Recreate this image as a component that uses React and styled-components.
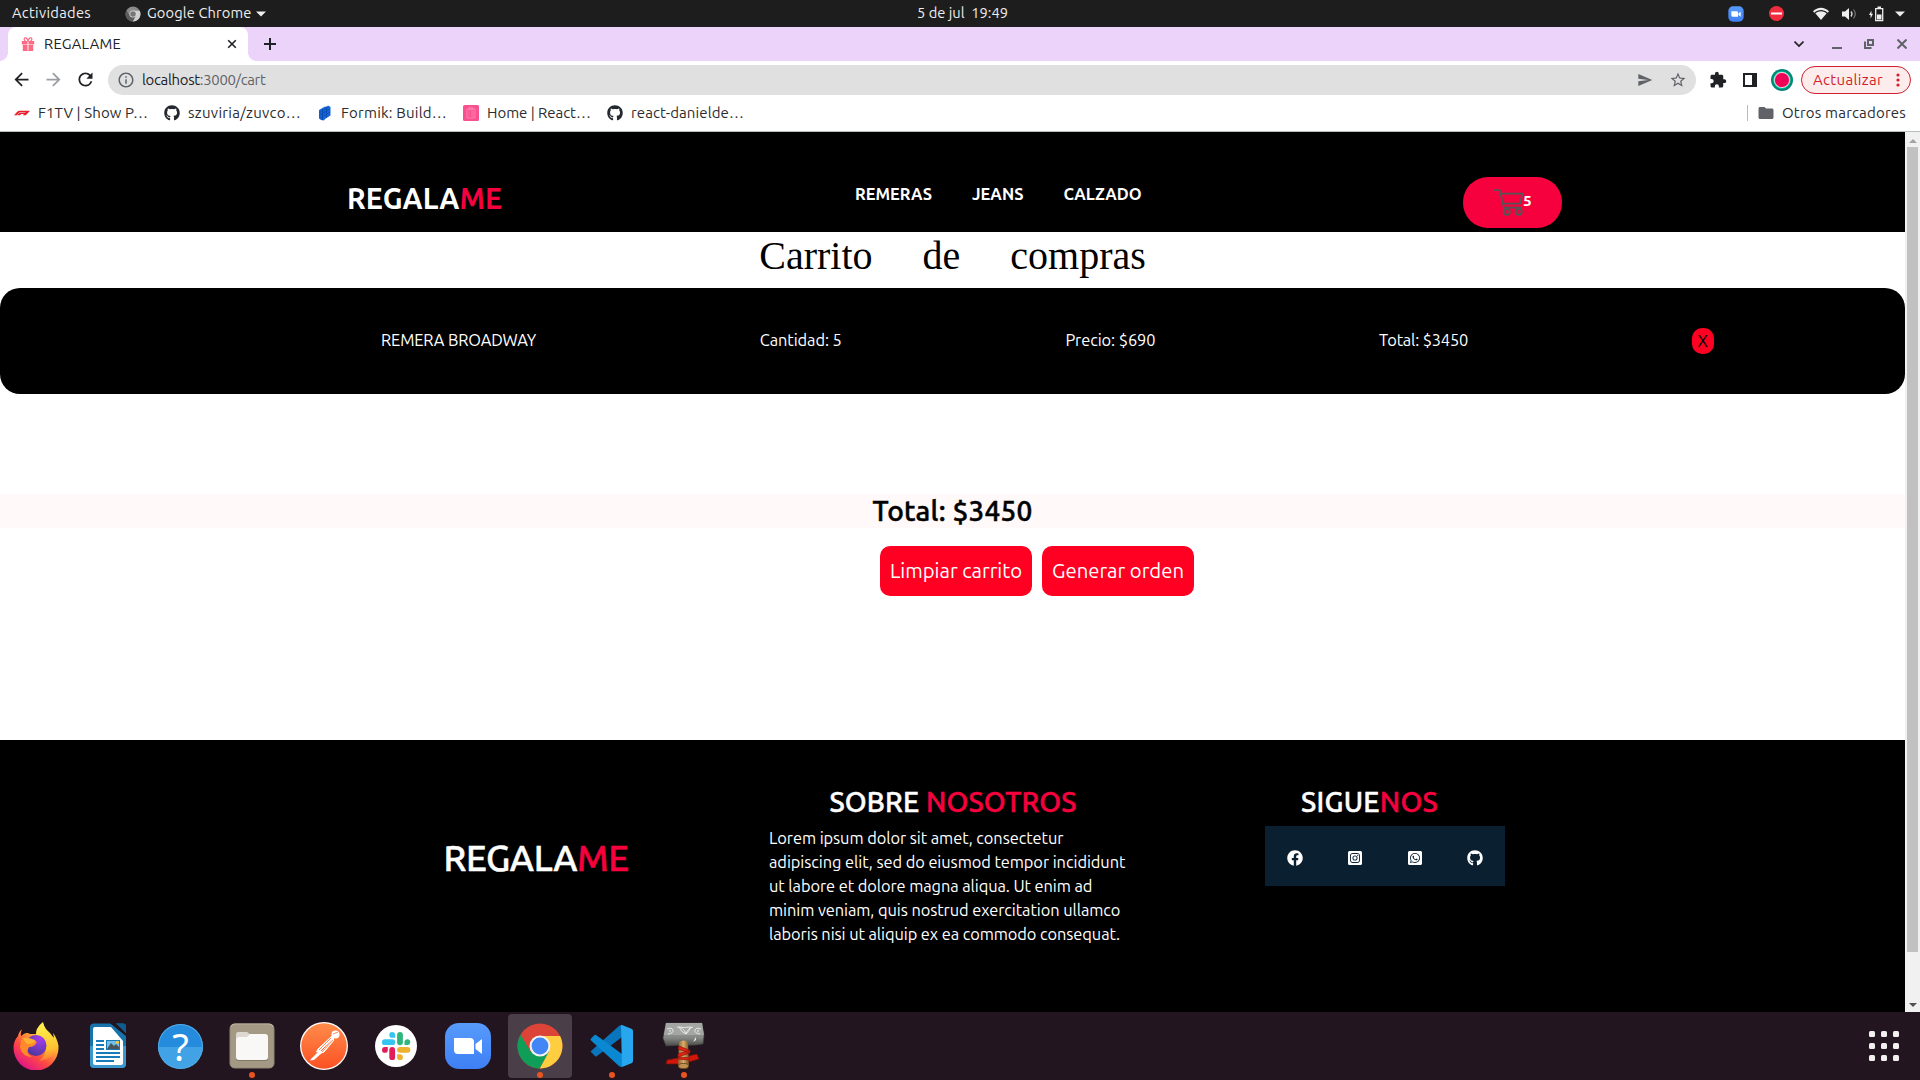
import React, { useLayoutEffect, useRef, useState } from "react";
import styled, { createGlobalStyle } from "styled-components";
import {
  FaFacebook,
  FaGithub,
  FaInstagramSquare,
  FaWhatsappSquare,
} from "react-icons/fa";
import {
  MdArrowBack,
  MdArrowForward,
  MdRefresh,
  MdInfoOutline,
  MdSend,
  MdStarBorder,
  MdExtension,
  MdFolder,
} from "react-icons/md";

const GlobalStyle = createGlobalStyle`
  *, *::before, *::after { box-sizing: border-box; }
  html, body { margin: 0; padding: 0; overflow: hidden; background: #fff; }
  body { font-family: Ubuntu, "Noto Sans", "Open Sans", sans-serif; color: #000; }
  h1, h2, h3, p, ul { margin: 0; padding: 0; font-weight: inherit; }
  svg { display: block; flex: none; }
`;

/* Text set to a fixed measure: tracking is adjusted so the run fills it. */
const Measure = styled.span`
  display: inline-block;
  flex: none;
  width: ${(p) => p.$w}px;
  white-space: pre;
`;

function Fit({ w, children }) {
  const ref = useRef(null);
  const [tracking, setTracking] = useState(0);
  useLayoutEffect(() => {
    const el = ref.current;
    el.style.letterSpacing = "0px";
    const natural = el.getBoundingClientRect().width;
    const value = (w - natural) / Math.max(1, el.textContent.length);
    el.style.letterSpacing = `${value}px`;
    setTracking(value);
  }, [w]);
  return (
    <Measure $w={w}>
      <span ref={ref} style={{ letterSpacing: tracking }}>
        {children}
      </span>
    </Measure>
  );
}

const Screen = styled.div`
  display: flex;
  flex-direction: column;
  width: 1920px;
  height: 1080px;
  overflow: hidden;
`;

/* ---------- desktop top bar ---------- */

const SystemBar = styled.header`
  display: grid;
  grid-template-columns: 917px 1fr auto;
  align-items: center;
  height: 27px;
  background: #1d1d1d;
  color: #eee;
  font-size: 14.67px;
`;

const SystemGroup = styled.div`
  display: flex;
  align-items: center;
  height: 27px;
  padding-left: ${(p) => p.$left || 0}px;
  line-height: 25px;

  ${Measure} {
    height: 27px;
  }
`;

const Spacer = styled.span`
  flex: none;
  width: ${(p) => p.$w}px;
`;

/* ---------- browser chrome ---------- */

const TabStrip = styled.div`
  display: flex;
  align-items: center;
  height: 34px;
  background: #ebd3fa;
`;

const TabCorner = styled.span`
  flex: none;
  align-self: flex-end;
  width: 8px;
  height: 8px;
  background: radial-gradient(
    circle at ${(p) => (p.$side === "left" ? "0 0" : "100% 0")},
    transparent 7.5px,
    #fff 8px
  );
`;

const Tab = styled.div`
  display: flex;
  align-items: center;
  width: 240px;
  height: 34px;
  padding-left: 13px;
  border-radius: 8px 8px 0 0;
  background: #fff;
  color: #202124;
  font-size: 14.67px;
  line-height: 34px;
`;

const TabTitle = styled.div`
  width: 181px;
  padding-left: 8px;
`;

const NewTab = styled.div`
  padding-left: 8px;
`;

const WindowControls = styled.div`
  display: flex;
  align-items: center;
  margin-left: auto;
  padding-right: 13px;
`;

const Toolbar = styled.div`
  display: flex;
  align-items: center;
  height: 37px;
  padding: 0 9px 0 11px;
  background: #fff;
  color: #202124;
`;

const Omnibox = styled.div`
  display: flex;
  align-items: center;
  width: 1588px;
  height: 30px;
  margin-left: 12px;
  padding: 0 9px;
  border-radius: 15px;
  background: #e0e0e0;
  color: #5f6368;
  font-size: 14.9px;
  line-height: 30px;
`;

const Url = styled.div`
  flex: 1;
  padding-left: 7px;
`;

const Host = styled.span`
  color: #202124;
`;

const UpdateButton = styled.div`
  display: flex;
  align-items: center;
  justify-content: space-between;
  width: 110px;
  height: 28px;
  margin-left: 8px;
  padding: 0 10px 0 11px;
  border: 1px solid #d01f2d;
  border-radius: 14px;
  background: #fcedec;
  color: #d01f2d;
  font-size: 15px;
  line-height: 26px;
`;

const Bookmarks = styled.div`
  display: flex;
  align-items: center;
  height: 34px;
  padding: 0 14px 3px 14px;
  border-bottom: 1px solid #b8beba;
  background: #fff;
  color: #2b2c2f;
  font-size: 15px;
  line-height: 30px;
`;

const Bookmark = styled.div`
  display: flex;
  align-items: center;
  gap: 8px;
  margin-right: 16px;
`;

const OtherBookmarks = styled.div`
  display: flex;
  align-items: center;
  margin-left: auto;
`;

const Divider = styled.span`
  width: 1px;
  height: 16px;
  margin-right: 9px;
  background: #bbb;
`;

/* ---------- page ---------- */

const Viewport = styled.div`
  display: flex;
  height: 880px;
`;

const Page = styled.main`
  display: flex;
  flex-direction: column;
  width: 1905px;
  background: #fff;
`;

const Scrollbar = styled.div`
  display: flex;
  flex-direction: column;
  align-items: center;
  justify-content: space-between;
  width: 15px;
  padding: 7px 0 5px;
  background: #f1f1f1;
`;

const Thumb = styled.div`
  width: 11px;
  height: 805px;
  margin-bottom: 47px;
  background: #c1c1c1;
`;

const Accent = styled.span`
  color: #f6003e;
`;

const SiteHeader = styled.header`
  display: flex;
  align-items: flex-start;
  height: 100px;
  padding-left: 347px;
  background: #000;
  color: #fff;
  font-weight: 700;
`;

const Brand = styled.div`
  width: 508px;
  padding-top: 46px;
  font-size: 28.6px;
  line-height: 40px;
`;

const Nav = styled.nav`
  display: flex;
  gap: 40px;
  width: 608px;
  padding-top: 50px;
  font-size: 16.4px;
  line-height: 24px;
`;

const CartPill = styled.div`
  display: flex;
  align-items: center;
  width: 99px;
  height: 51px;
  margin-top: 45px;
  padding-left: 30px;
  border-radius: 25px;
  background: #f6003e;
  font-size: 15.5px;
  line-height: 47px;
`;

const CartCount = styled.span`
  height: 51px;
  margin-left: -1px;
`;

const Title = styled.h1`
  height: 56px;
  font-family: "Liberation Serif", "Times New Roman", serif;
  font-size: 40px;
  line-height: 47px;
  text-align: center;
  word-spacing: 40px;
`;

const CartRow = styled.section`
  display: flex;
  align-items: center;
  gap: 223.7px;
  height: 106px;
  padding: 0 0 2px 381px;
  border-radius: 20px;
  background: #000;
  color: #fff;
  font-size: 16.4px;
  line-height: 24px;
`;

const RemoveButton = styled.span`
  display: flex;
  justify-content: center;
  width: 22px;
  height: 26px;
  margin-top: 2px;
  border-radius: 10px;
  background: #ff0022;
  color: #000;
  font-size: 17px;
  line-height: 26px;
`;

const TotalStrip = styled.section`
  height: 34px;
  margin-top: 100px;
  padding-left: 872.5px;
  background: #fff9f9;
  font-size: 28px;
  font-weight: 500;
  line-height: 34px;
  -webkit-text-stroke: 0.5px currentColor;
`;

const Actions = styled.div`
  display: flex;
  gap: 10px;
  padding: 18px 0 0 880px;
`;

const ActionButton = styled.div`
  display: flex;
  justify-content: center;
  width: 152px;
  height: 50px;
  border-radius: 10px;
  background: #ff0022;
  color: #fff;
  font-size: 20.3px;
  line-height: 50px;
`;

const Footer = styled.footer`
  display: flex;
  align-items: flex-start;
  height: 272px;
  margin-top: auto;
  padding-left: 443.5px;
  background: #000;
  color: #fff;
`;

const FooterBrand = styled.div`
  width: 325.5px;
  padding-top: 98px;
  font-size: 36px;
  font-weight: 500;
  line-height: 40px;
  -webkit-text-stroke: 0.5px currentColor;
`;

const FooterHeading = styled.h2`
  padding-left: ${(p) => p.$left}px;
  font-size: 28px;
  font-weight: 500;
  line-height: 34px;
  -webkit-text-stroke: 0.5px currentColor;
`;

const About = styled.div`
  width: 496px;
  padding-top: 45px;
`;

const AboutText = styled.p`
  display: flex;
  flex-direction: column;
  padding-top: 7px;
  font-size: 16.4px;
  line-height: 24px;
`;

const Follow = styled.div`
  padding-top: 45px;
`;

const SocialBar = styled.div`
  display: flex;
  width: 240px;
  height: 60px;
  margin-top: 7px;
  background: #0a1f30;
`;

const SocialLink = styled.span`
  display: flex;
  align-items: center;
  justify-content: center;
  width: 60px;
  padding-top: 4px;
  font-size: 16px;
`;

/* ---------- dock ---------- */

const Dock = styled.footer`
  display: flex;
  align-items: center;
  gap: 8px;
  height: 68px;
  padding: 0 21px 0 4px;
  background: #22151f;
`;

const DockItem = styled.div`
  display: flex;
  flex-direction: column;
  align-items: center;
  width: 64px;
  height: 64px;
  padding-top: 8px;
  border-radius: 4px;
  background: ${(p) => (p.$active ? "#4a3f48" : "transparent")};

  &::after {
    content: "";
    width: 6px;
    height: 6px;
    margin-top: 2px;
    border-radius: 50%;
    background: ${(p) => (p.$running ? "#e95420" : "transparent")};
  }
`;

const AppGrid = styled.div`
  display: grid;
  grid-template-columns: repeat(3, 6px);
  gap: 6px;
  margin-left: auto;
`;

const AppDot = styled.span`
  height: 6px;
  border-radius: 1.5px;
  background: #f2f0ef;
`;

/* ---------- icons ---------- */

const ChromeMark = ({ size, mono }) => {
  const c = mono
    ? ["#8a8a8a", "#5c5c5c", "#d0d0d0", "#777", "#ddd"]
    : ["#db4437", "#0f9d58", "#ffcd40", "#4285f4", "#f1f1f1"];
  return (
    <svg width={size} height={size} viewBox="0 0 48 48">
      <circle cx="24" cy="24" r="22.5" fill={c[0]} />
      <path d="M4.5 12.8A22.5 22.5 0 0 0 23.8 46.5L33.5 29.5 14.5 29.5Z" fill={c[1]} />
      <path d="M24 14H44.1A22.5 22.5 0 0 1 23.8 46.5L33 29.5Z" fill={c[2]} />
      <circle cx="24" cy="24" r="10.5" fill={c[4]} />
      <circle cx="24" cy="24" r="8.4" fill={c[3]} />
    </svg>
  );
};

const Caret = () => (
  <svg width="10" height="6" viewBox="0 0 10 6">
    <path d="M0 .5h10L5 5.5z" fill="#eee" />
  </svg>
);

const ZoomMark = ({ size }) => (
  <svg width={size} height={size} viewBox="0 0 48 48">
    <defs>
      <linearGradient id={`zoom${size}`} x2="0" y2="1">
        <stop stopColor="#579bfc" />
        <stop offset="1" stopColor="#3f7ff5" />
      </linearGradient>
    </defs>
    <rect x="1" y="1" width="46" height="46" rx="14" fill={`url(#zoom${size})`} />
    <path d="M10 16h16q4 0 4 4v12H14q-4 0-4-4zM31.5 22l6.5-5v15l-6.5-5z" fill="#fff" />
  </svg>
);

const Wifi = () => (
  <svg width="16" height="14" viewBox="0 0 16 14">
    <path d="M0 4.3C4.5-.4 11.5-.4 16 4.3L14.7 5.8C10.8 2.1 5.2 2.1 1.3 5.8Z" fill="#eee" />
    <path d="M2.3 6.3C6 3.4 10 3.4 13.7 6.3L8 13Z" fill="#eee" />
  </svg>
);

const Volume = () => (
  <svg width="15" height="14" viewBox="0 0 15 14">
    <path d="M0 4.5h3L7 1v12L3 9.5H0z" fill="#eee" />
    <path d="M9 4.5q2 2.5 0 5" fill="none" stroke="#ddd" strokeWidth="1.3" />
    <path d="M11.5 2.5q3.5 4.5 0 9" fill="none" stroke="#777" strokeWidth="1.2" />
  </svg>
);

const Battery = () => (
  <svg width="15" height="16" viewBox="0 0 15 16">
    <path d="M2.4 4.500 0 9h1.600v3.500L4 7.800H2.400z" fill="#eee" />
    <path d="M6.700 2.700h7v12h-7z" fill="none" stroke="#eee" strokeWidth="1.3" />
    <path d="M8.500.500h3.500V2H8.500zM8 8.500h4.500v5H8z" fill="#eee" />
  </svg>
);

const Gift = () => (
  <svg width="14" height="14" viewBox="0 0 14 14">
    <path d="M4.5 4C2 2.5 3.5.2 5 .9 6.3 1.5 7 4 7 4s.7-2.5 2-3.1c1.5-.7 3 1.6.5 3.1" fill="none" stroke="#fb6b84" strokeWidth="1.2" />
    <path d="M.8 4h12.4v3.4H.8zM1.8 8h10.4v6H1.8z" fill="#fb6b84" />
    <path d="M6.3 4.5h1.4v9H6.3z" fill="#ffd5dc" />
  </svg>
);

const Stroke = ({ size = 10, d, color = "#5f6368", width = 2, box = 10 }) => (
  <svg width={size} height={size} viewBox={`0 0 ${box} ${box}`}>
    <path d={d} fill="none" stroke={color} strokeWidth={width} />
  </svg>
);

const SidePanel = () => (
  <svg width="14" height="14" viewBox="0 0 14 14">
    <path d="M0 0h14v14H0zM2 2v10h7V2z" fill="#202124" fillRule="evenodd" />
  </svg>
);

const Avatar = () => (
  <svg width="22" height="22" viewBox="0 0 22 22">
    <circle cx="11" cy="11" r="11" fill="#00897b" />
    <circle cx="11" cy="11" r="8.6" fill="#1de9b6" />
    <circle cx="11" cy="11" r="7.9" fill="#ffcdd8" />
    <circle cx="11" cy="11" r="7.1" fill="#f50057" />
    <circle cx="11" cy="11" r="5" fill="none" stroke="#c2185b" strokeWidth=".7" strokeDasharray="1.5 2" />
  </svg>
);

const Dots = () => (
  <svg width="4" height="14" viewBox="0 0 4 14">
    {[2, 7, 12].map((y) => (
      <circle key={y} cx="2" cy={y} r="1.6" fill="#d01f2d" />
    ))}
  </svg>
);

const F1Mark = () => (
  <svg width="16" height="16" viewBox="0 0 16 16">
    <path d="M0 10.2 3 7q1-1.2 2.8-1.2H13L11.600 7.300H6.300q-1 0-1.600.7L2.800 10.2zM3.300 10.2 4.800 8.500q.7-.8 2-.8h4.400L9.900 9.100H7.200L6 10.2zM8.800 10.2 13 5.800h3l-4.200 4.400z" fill="#e8202a" />
  </svg>
);

const FormikMark = () => (
  <svg width="16" height="16" viewBox="0 0 16 16">
    <path d="M2 5 8 1.5l1.5.5L11 .5l2.5 1.5v8.5L8 14l-1 1.5L4 15l-2-1.5z" fill="#1565d8" />
    <path d="m2 8 8.5-5M2 10.5 13 4M3 13l10-6M5.5 4v11M9.5 1.5V13" stroke="#0747a6" strokeWidth=".7" />
  </svg>
);

const ClipboardMark = () => (
  <svg width="16" height="16" viewBox="0 0 16 16">
    <rect width="16" height="16" rx="1.5" fill="#f9508f" />
    <path d="M4 4h8v9H4zM6 2.8h4v2H6zM5.5 7h1M8 7h3M5.5 9h1M8 9h3M5.5 11h1M8 11h3" fill="none" stroke="#fd8db7" strokeWidth=".8" />
  </svg>
);

const Cart = () => (
  <svg width="31" height="27" viewBox="0 0 31 27">
    <g fill="none" stroke="#555" strokeWidth="1.8">
      <path d="M0 1.2H6.7L10.8 18.6H28.8M8 4.7H29.4L27 14.6H10" strokeLinejoin="round" />
      <circle cx="13.7" cy="22.7" r="3" strokeWidth="2" />
      <circle cx="25.7" cy="22.7" r="3" strokeWidth="2" />
    </g>
  </svg>
);

const Firefox = () => (
  <svg width="48" height="48" viewBox="0 0 48 48">
    <defs>
      <linearGradient id="fxBody" x1=".85" y1=".1" x2=".25" y2=".95">
        <stop stopColor="#fff44f" />
        <stop offset=".35" stopColor="#ffa436" />
        <stop offset=".65" stopColor="#ff4b41" />
        <stop offset="1" stopColor="#e31587" />
      </linearGradient>
      <linearGradient id="fxTail" x1=".5" x2=".6" y2="1">
        <stop stopColor="#fff44f" />
        <stop offset=".7" stopColor="#ffc02f" />
        <stop offset="1" stopColor="#ff7139" />
      </linearGradient>
      <radialGradient id="fxGlobe" cx=".7" cy=".2" r=".9">
        <stop stopColor="#a53cf0" />
        <stop offset="1" stopColor="#473795" />
      </radialGradient>
    </defs>
    <path d="M10 7.5Q8.5 10 9 14L11 12.5Q15 10 18 12L25 12Q28 5 31 2Q33 7 38 11L41 15Q46 19 46.5 26A22.5 22.5 0 0 1 1.5 26Q1.5 19 6 14Q7 9 10 7.5Z" fill="url(#fxBody)" />
    <path d="M31 0Q23 6 24 14Q34 15 34 25Q34 34 27 39Q43 37 46.5 24Q45 16 41 11L42 16Q33 10 31 0Z" fill="url(#fxTail)" />
    <circle cx="24" cy="23.5" r="10.5" fill="url(#fxGlobe)" />
    <path d="M9 18Q18 16 25 20Q23 25 17 25Q13 31 20 35Q11 35 8 26Z" fill="#ff8a2b" />
    <path d="M10 16Q18 15 24 19Q20 23 15 22Z" fill="#ffb02e" />
  </svg>
);

const Writer = () => (
  <svg width="48" height="48" viewBox="4 0 48 48">
    <path d="M14 1.5H42q4 0 4 4V42q0 4-4 4H14q-4 0-4-4V5.5q0-4 4-4z" fill="#1773ab" />
    <path d="M10 24h36v18q0 4-4 4H14q-4 0-4-4z" fill="#3b97cd" />
    <path d="M30 1h6l10.5 10.5v3L31 2z" fill="#22151f" />
    <path d="M36 1.5h8q2 0 2 2V11z" fill="#0d5d8f" />
    <path d="M15 5h16L43 19v22q0 2-2 2H15q-2 0-2-2V7q0-2 2-2z" fill="#fff" />
    <path d="M16 19h8M16 23h8M16 27h8M16 31h24M16 35h24M16 39h18" stroke="#197cb8" strokeWidth="2" />
    <path d="M26 18h14v10H26z" fill="#1679b5" />
    <path d="M27 19h12v8H27z" fill="#72bfe8" />
    <path d="m27 27 4-6 3 3 2-2 3 3v2z" fill="#4b5359" />
    <circle cx="37.5" cy="20.3" r="1.5" fill="#ffc928" />
  </svg>
);

const QuestionMark = styled.span`
  display: flex;
  justify-content: center;
  width: 45px;
  height: 45px;
  margin: 1.5px 1px 1.5px 2px;
  border-radius: 50%;
  background: linear-gradient(#258bdd 0 52%, #41a2e5 52%);
  box-shadow: inset 0 0 0 1px #50a9e5;
  color: #fff;
  font-family: "Noto Sans", sans-serif;
  font-size: 38px;
  line-height: 44px;
`;

const Files = () => (
  <svg width="48" height="48" viewBox="0 0 48 48">
    <rect x="2" y="2" width="44" height="44" rx="4.5" fill="#a39985" stroke="#8e8672" />
    <path d="M3 5q0-3 4-3h34q4 0 4 3" fill="none" stroke="#bfb7a5" />
    <path d="M8 13q0-3 2-3h9l4 3h13v10H8z" fill="#ded9d0" />
    <rect x="8" y="15" width="32" height="24" rx="2.5" fill="#7f7664" />
    <path d="M8 17q0-2 2-2h9l3-3h15q3 0 3 3v20q0 3-3 3H11q-3 0-3-3z" fill="#f9f8f7" />
  </svg>
);

const Postman = () => (
  <svg width="48" height="48" viewBox="0 0 48 48">
    <defs>
      <linearGradient id="post" x2="0" y2="1">
        <stop stopColor="#ff8c4b" />
        <stop offset="1" stopColor="#fc5124" />
      </linearGradient>
    </defs>
    <circle cx="24" cy="24" r="24" fill="#fff" />
    <circle cx="24" cy="24" r="22.7" fill="url(#post)" />
    <circle cx="35.5" cy="12.5" r="4" fill="#fff" />
    <path d="M32 14 18 27l-1.5 3 3-1L34 16M34 17 22 29l-1 2 3-1 10-12" fill="#fff" stroke="#fff" />
    <path d="m20 28-9 9-1 1.5 4-.5 9-8" fill="#fff" />
    <path d="M31 16 19 28M33 18 22 30M33 12l5-2" stroke="#f4743e" strokeWidth=".8" />
  </svg>
);

const Slack = () => (
  <svg width="48" height="48" viewBox="0 0 48 48">
    <circle cx="24" cy="24" r="21" fill="#fff" />
    <g fill="none" strokeLinecap="round" strokeWidth="5.8">
      <path d="M12.8 20.2h7.500" stroke="#36c5f0" />
      <path d="M28 12.8v7.500" stroke="#2eb67d" />
      <path d="M28 27.8h7.5" stroke="#ecb22e" />
      <path d="M20.2 28v7.2" stroke="#e01e5a" />
    </g>
    <path d="M23.1 15.8h-2.9a2.9 2.9 0 1 1 2.9-2.9z" fill="#36c5f0" />
    <path d="M32.5 23v-2.9a2.9 2.9 0 1 1 2.9 2.9z" fill="#2eb67d" />
    <path d="M25.1 32.3H28a2.9 2.9 0 1 1-2.9 2.9z" fill="#ecb22e" />
    <path d="M15.8 25v2.9a2.9 2.9 0 1 1-2.9-2.9z" fill="#e01e5a" />
  </svg>
);

const VsCode = () => (
  <svg width="48" height="48" viewBox="0 0 48 48">
    <path d="M3 29 31 4q1-1 3-1v12L9 34q-1 1-2 0l-4-4q-1-.5 0-1z" fill="#0875bc" />
    <path d="m8 13 26 19v13q-2 0-3-1L3 18.5q-1-1 0-2l3-3q1-1 2-.5z" fill="#0b88d2" />
    <path d="M34 3q-1 0-1 0l1 42 10-4q1-1 1-2V9q0-1-1-2z" fill="#27a8ee" />
  </svg>
);

const Hammer = () => (
  <svg width="48" height="48" viewBox="0 0 48 48">
    <defs>
      <linearGradient id="steel" x2="0" y2="1">
        <stop stopColor="#a9aaa8" />
        <stop offset=".65" stopColor="#858784" />
        <stop offset="1" stopColor="#464946" />
      </linearGradient>
      <linearGradient id="wood">
        <stop stopColor="#8c602d" />
        <stop offset=".5" stopColor="#daae6a" />
        <stop offset="1" stopColor="#7c511f" />
      </linearGradient>
    </defs>
    <path d="M18 36 7 38l-1 4 17 0zM28 34l9-2 2 5-10 3z" fill="#d3160c" stroke="#711009" strokeWidth=".8" />
    <path d="M6 1h36l2 13-1 8q-9 2-19 1L6 24 3 16z" fill="url(#steel)" stroke="#40423f" strokeWidth=".6" />
    <path d="M6 1h36l2 12H4z" fill="#a4a6a3" />
    <path d="M7 7q5-2 6 1t-5 4M9 8q2 0 1 2M41 7q-5-2-6 1t5 4M39 8q-2 0-1 2M17 5q7 0 9 7 2-6 7-7M19 5q5 1 12 0-2 4-5 7-5-2-7-7" fill="none" stroke="#e7e8e5" />
    <path d="m36 15-3 5 3-2z" fill="#eee" />
    <path d="M19 20q4.500-3 9 0l1 24q-5 4-11 1z" fill="url(#wood)" />
    <path d="m19 24 10 4v3l-11-4zm-1 8 12-4v3l-12 4zm1 3 11 1-1 2-12-1z" fill="#e02314" stroke="#8e140b" strokeWidth=".7" />
    <ellipse cx="23.5" cy="44" rx="5" ry="2.6" fill="#c29254" stroke="#704819" />
  </svg>
);

/* ---------- content ---------- */

const bookmarks = [
  { icon: <F1Mark />, label: "F1TV | Show P…", w: 110 },
  { icon: <FaGithub size={16} color="#24292f" />, label: "szuviria/zuvco…", w: 113 },
  { icon: <FormikMark />, label: "Formik: Build…", w: 106 },
  { icon: <ClipboardMark />, label: "Home | React…", w: 104 },
  { icon: <FaGithub size={16} color="#24292f" />, label: "react-danielde…", w: 113 },
];

const categories = [
  { label: "REMERAS", w: 77 },
  { label: "JEANS", w: 51.5 },
  { label: "CALZADO", w: 78 },
];

const rowFields = [
  { label: "REMERA BROADWAY", w: 155 },
  { label: "Cantidad: 5", w: 82 },
  { label: "Precio: $690", w: 90 },
  { label: "Total: $3450", w: 89 },
];

const aboutLines = [
  { text: "Lorem ipsum dolor sit amet, consectetur ", w: 298 },
  { text: "adipiscing elit, sed do eiusmod tempor incididunt ", w: 360 },
  { text: "ut labore et dolore magna aliqua. Ut enim ad ", w: 327 },
  { text: "minim veniam, quis nostrud exercitation ullamco ", w: 355 },
  { text: "laboris nisi ut aliquip ex ea commodo consequat.", w: 351 },
];

const socials = [FaFacebook, FaInstagramSquare, FaWhatsappSquare, FaGithub];

const dockItems = [
  { icon: <Firefox /> },
  { icon: <Writer /> },
  { icon: <QuestionMark>?</QuestionMark> },
  { icon: <Files />, running: true },
  { icon: <Postman /> },
  { icon: <Slack /> },
  { icon: <ZoomMark size={48} /> },
  { icon: <ChromeMark size={48} />, running: true, active: true },
  { icon: <VsCode />, running: true },
  { icon: <Hammer />, running: true },
];

export default function App() {
  return (
    <Screen>
      <GlobalStyle />
      <SystemBar>
        <SystemGroup $left={12}>
          <Fit w={79}>Actividades</Fit>
          <Spacer $w={34} />
          <ChromeMark size={16} mono />
          <Spacer $w={6} />
          <Fit w={104.5}>Google Chrome</Fit>
          <Spacer $w={4.5} />
          <Caret />
        </SystemGroup>
        <SystemGroup>
          <Fit w={91}>{"5 de jul  19:49"}</Fit>
        </SystemGroup>
        <SystemGroup>
          <ZoomMark size={16} />
          <Spacer $w={25} />
          <svg width="15" height="15" viewBox="0 0 15 15">
            <circle cx="7.5" cy="7.5" r="7.5" fill="#f22c3f" />
            <path d="M2 6.5h11v2H2z" fill="#fff" />
          </svg>
          <Spacer $w={29} />
          <Wifi />
          <Spacer $w={13} />
          <Volume />
          <Spacer $w={12} />
          <Battery />
          <Spacer $w={11} />
          <Caret />
          <Spacer $w={15} />
        </SystemGroup>
      </SystemBar>

      <TabStrip>
        <TabCorner $side="left" />
        <Tab>
          <Gift />
          <Spacer $w={1} />
          <TabTitle>
            <Fit w={77}>REGALAME</Fit>
          </TabTitle>
          <Spacer $w={10} />
          <Stroke d="M1.2 1.2 8.8 8.8M8.8 1.2 1.2 8.8" color="#202124" width={1.6} />
        </Tab>
        <TabCorner $side="right" />
        <NewTab>
          <Stroke size={12} box={12} d="M6 0v12M0 6h12" color="#202124" />
        </NewTab>
        <WindowControls>
          <Stroke d="M.5 2.5 5 7l4.5-4.5" color="#202124" width={1.7} />
          <Spacer $w={28} />
          <Stroke d="M0 9h10" />
          <Spacer $w={22} />
          <Stroke d="M4 1h5v5H4zM1 2.5V9h6.5" />
          <Spacer $w={23} />
          <Stroke d="M.5.5l9 9M9.5.5l-9 9" />
        </WindowControls>
      </TabStrip>

      <Toolbar>
        <MdArrowBack size={21} />
        <Spacer $w={11} />
        <MdArrowForward size={21} color="#9a9da1" />
        <Spacer $w={11} />
        <MdRefresh size={21} />
        <Omnibox>
          <MdInfoOutline size={18} />
          <Url>
            <Fit w={123.5}>
              <Host>localhost</Host>:3000/cart
            </Fit>
          </Url>
          <MdSend size={16} />
          <Spacer $w={16} />
          <MdStarBorder size={18} />
        </Omnibox>
        <Spacer $w={13} />
        <MdExtension size={18} />
        <Spacer $w={16} />
        <SidePanel />
        <Spacer $w={14} />
        <Avatar />
        <UpdateButton>
          <Fit w={70}>Actualizar</Fit>
          <Dots />
        </UpdateButton>
      </Toolbar>

      <Bookmarks>
        {bookmarks.map((b) => (
          <Bookmark key={b.label}>
            {b.icon}
            <Fit w={b.w}>{b.label}</Fit>
          </Bookmark>
        ))}
        <OtherBookmarks>
          <Divider />
          <MdFolder size={18} color="#5f6368" />
          <Spacer $w={7} />
          <Fit w={124}>Otros marcadores</Fit>
        </OtherBookmarks>
      </Bookmarks>

      <Viewport>
        <Page>
          <SiteHeader>
            <Brand>
              <Fit w={155}>
                REGALA<Accent>ME</Accent>
              </Fit>
            </Brand>
            <Nav>
              {categories.map((c) => (
                <Fit key={c.label} w={c.w}>
                  {c.label}
                </Fit>
              ))}
            </Nav>
            <CartPill>
              <Cart />
              <CartCount>
                <Fit w={9}>5</Fit>
              </CartCount>
            </CartPill>
          </SiteHeader>
          <Title>Carrito de compras</Title>
          <CartRow>
            {rowFields.map((f) => (
              <Fit key={f.label} w={f.w}>
                {f.label}
              </Fit>
            ))}
            <RemoveButton>X</RemoveButton>
          </CartRow>
          <TotalStrip>
            <Fit w={160}>Total: $3450</Fit>
          </TotalStrip>
          <Actions>
            <ActionButton>
              <Fit w={132}>Limpiar carrito</Fit>
            </ActionButton>
            <ActionButton>
              <Fit w={132}>Generar orden</Fit>
            </ActionButton>
          </Actions>
          <Footer>
            <FooterBrand>
              <Fit w={185}>
                REGALA<Accent>ME</Accent>
              </Fit>
            </FooterBrand>
            <About>
              <FooterHeading $left={60.5}>
                <Fit w={247}>
                  SOBRE <Accent>NOSOTROS</Accent>
                </Fit>
              </FooterHeading>
              <AboutText>
                {aboutLines.map((l) => (
                  <Fit key={l.text} w={l.w}>
                    {l.text}
                  </Fit>
                ))}
              </AboutText>
            </About>
            <Follow>
              <FooterHeading $left={36}>
                <Fit w={137}>
                  SIGUE<Accent>NOS</Accent>
                </Fit>
              </FooterHeading>
              <SocialBar>
                {socials.map((Icon, i) => (
                  <SocialLink key={i}>
                    <Icon />
                  </SocialLink>
                ))}
              </SocialBar>
            </Follow>
          </Footer>
        </Page>
        <Scrollbar>
          <svg width="8" height="4" viewBox="0 0 8 4">
            <path d="M0 4h8L4 0z" fill="#a3a3a3" />
          </svg>
          <Thumb />
          <svg width="8" height="4" viewBox="0 0 8 4">
            <path d="M0 0h8L4 4z" fill="#505050" />
          </svg>
        </Scrollbar>
      </Viewport>

      <Dock>
        {dockItems.map((d, i) => (
          <DockItem key={i} $active={d.active} $running={d.running}>
            {d.icon}
          </DockItem>
        ))}
        <AppGrid>
          {Array.from({ length: 9 }, (_, i) => (
            <AppDot key={i} />
          ))}
        </AppGrid>
      </Dock>
    </Screen>
  );
}
